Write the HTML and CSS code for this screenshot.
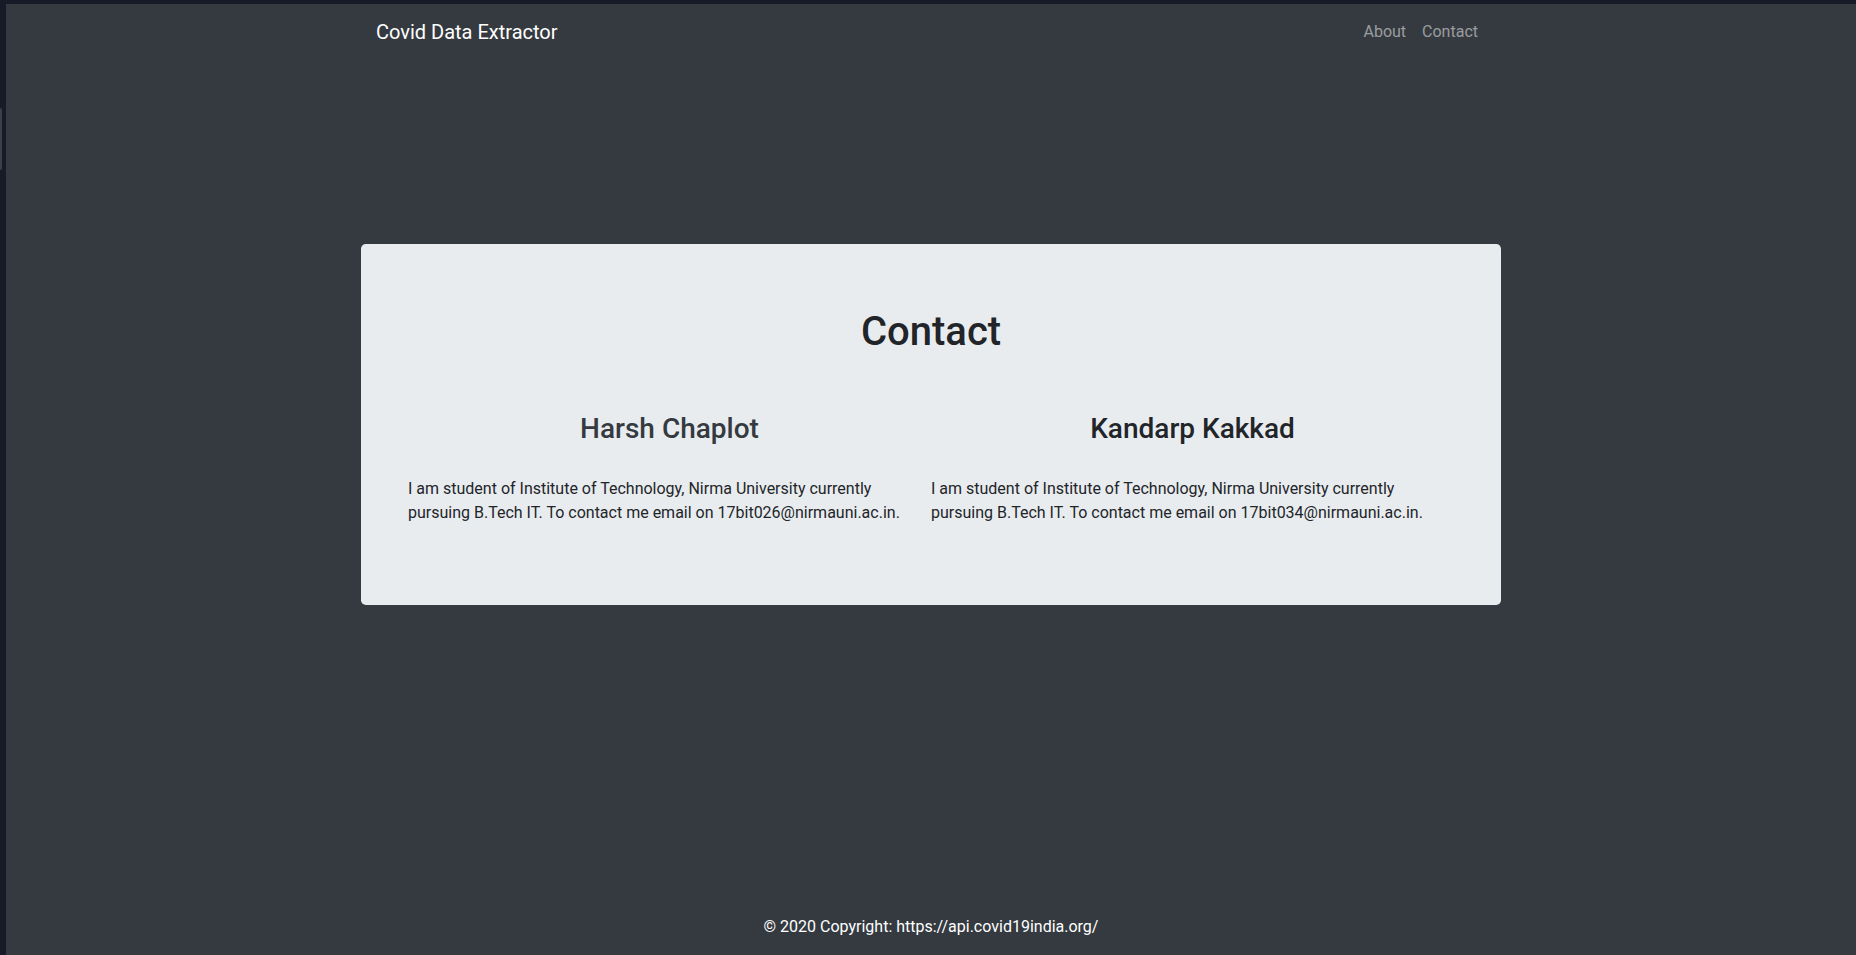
FILE: index.html
```html
<!DOCTYPE html>
<html lang="en">
<head>
<meta charset="utf-8">
<title>Covid Data Extractor - Contact</title>
<link rel="stylesheet" href="styles.css">
</head>
<body>
  <div class="frame-side">
    <div class="frame-thumb"></div>
  </div>
  <div class="page">
    <nav class="navbar">
      <div class="container nav-inner">
        <a class="brand" href="#">Covid Data Extractor</a>
        <ul class="nav-links">
          <li><a class="nav-link" href="#">About</a></li>
          <li><a class="nav-link" href="#">Contact</a></li>
        </ul>
      </div>
    </nav>
    <main class="main">
      <section class="jumbotron">
        <h1 class="title">Contact</h1>
        <div class="people">
          <div class="person">
            <h3 class="name name-muted">Harsh Chaplot</h3>
            <p class="bio">I am student of Institute of Technology, Nirma University currently pursuing B.Tech IT. To contact me email on 17bit026@nirmauni.ac.in.</p>
          </div>
          <div class="person">
            <h3 class="name">Kandarp Kakkad</h3>
            <p class="bio">I am student of Institute of Technology, Nirma University currently pursuing B.Tech IT. To contact me email on 17bit034@nirmauni.ac.in.</p>
          </div>
        </div>
      </section>
    </main>
    <footer class="footer">© 2020 Copyright: https://api.covid19india.org/</footer>
  </div>
</body>
</html>
```

FILE: styles.css
```css
* {
  box-sizing: border-box;
}

html, body {
  margin: 0;
  padding: 0;
  height: 955px;
  overflow: hidden;
}

body {
  background: #171b27;
  font-family: Roboto, "Liberation Sans", Arial, sans-serif;
  font-size: 16px;
  line-height: 1.5;
  color: #212529;
  display: flex;
}

.frame-side {
  width: 6px;
  flex: none;
  padding-top: 108px;
}

.frame-thumb {
  width: 2px;
  height: 62px;
  background: #3a3f4b;
  border-radius: 0 2px 2px 0;
}

.page {
  flex: 1;
  margin-top: 4px;
  height: 951px;
  background: #343a40;
  display: flex;
  flex-direction: column;
}

.container {
  width: 100%;
  max-width: 1140px;
  margin: 0 auto;
  padding: 0 15px;
}

.navbar {
  padding: 8px 0;
}

.nav-inner {
  display: flex;
  align-items: center;
  justify-content: space-between;
}

.brand {
  font-size: 20px;
  line-height: 30px;
  padding: 5px 0;
  color: #fff;
  text-decoration: none;
}

.nav-links {
  list-style: none;
  margin: 0;
  padding: 0;
  display: flex;
}

.nav-link {
  display: block;
  padding: 8px;
  line-height: 24px;
  color: rgba(255, 255, 255, 0.5);
  text-decoration: none;
}

.main {
  flex: 1;
  padding-top: 184px;
}

.jumbotron {
  max-width: 1140px;
  margin: 0 auto;
  background: #e9ecef;
  border-radius: 4.8px;
  padding: 64px 47px;
}

.title {
  margin: 0 0 8px;
  font-size: 40px;
  line-height: 48px;
  font-weight: 500;
  text-align: center;
  color: #212529;
}

.people {
  margin-top: 56px;
  display: grid;
  grid-template-columns: 1fr 1fr;
}

.name {
  margin: 0 0 8px;
  font-size: 28px;
  line-height: 33.6px;
  font-weight: 500;
  text-align: center;
  color: #212529;
}

.name-muted {
  color: #343a40;
}

.bio {
  margin: 31px 0 16px;
  padding-right: 4px;
}

.footer {
  padding: 16px;
  text-align: center;
  color: #fff;
  line-height: 24px;
}
```
